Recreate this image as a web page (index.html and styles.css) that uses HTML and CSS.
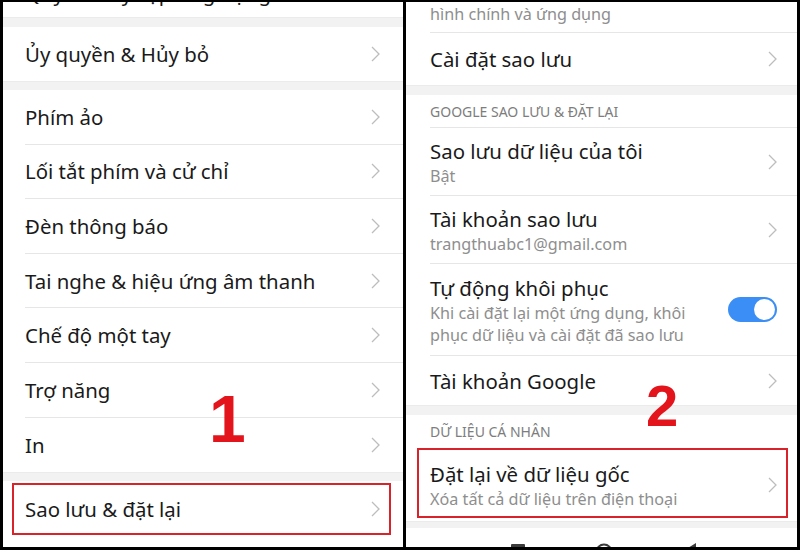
FILE: index.html
```html
<!DOCTYPE html>
<html lang="vi">
<head>
  <meta charset="UTF-8">
  <title>Sao lưu &amp; đặt lại</title>
  <link rel="stylesheet" href="styles.css">
</head>
<body>

<div class="screen">

  <!-- Màn hình 1: Cài đặt nâng cao -->
  <section class="panel panel-left">
    <div class="row row-cut last">
      <div class="row-body"><span class="title">Quyền truy cập ứng dụng</span></div>
    </div>
    <div class="band band-10"></div>

    <div class="row row-l last">
      <div class="row-body">
        <span class="title">Ủy quyền &amp; Hủy bỏ</span>
        <svg class="chev" viewBox="0 0 9 16"><polyline points="1,1 8,8 1,15"/></svg>
      </div>
    </div>
    <div class="band band-9"></div>

    <div class="row row-l">
      <div class="row-body">
        <span class="title">Phím ảo</span>
        <svg class="chev" viewBox="0 0 9 16"><polyline points="1,1 8,8 1,15"/></svg>
      </div>
    </div>
    <div class="row row-l">
      <div class="row-body">
        <span class="title">Lối tắt phím và cử chỉ</span>
        <svg class="chev" viewBox="0 0 9 16"><polyline points="1,1 8,8 1,15"/></svg>
      </div>
    </div>
    <div class="row row-l">
      <div class="row-body">
        <span class="title">Đèn thông báo</span>
        <svg class="chev" viewBox="0 0 9 16"><polyline points="1,1 8,8 1,15"/></svg>
      </div>
    </div>
    <div class="row row-l">
      <div class="row-body">
        <span class="title">Tai nghe &amp; hiệu ứng âm thanh</span>
        <svg class="chev" viewBox="0 0 9 16"><polyline points="1,1 8,8 1,15"/></svg>
      </div>
    </div>
    <div class="row row-l">
      <div class="row-body">
        <span class="title">Chế độ một tay</span>
        <svg class="chev" viewBox="0 0 9 16"><polyline points="1,1 8,8 1,15"/></svg>
      </div>
    </div>
    <div class="row row-l">
      <div class="row-body">
        <span class="title">Trợ năng</span>
        <svg class="chev" viewBox="0 0 9 16"><polyline points="1,1 8,8 1,15"/></svg>
      </div>
    </div>
    <div class="row row-l last">
      <div class="row-body">
        <span class="title">In</span>
        <svg class="chev" viewBox="0 0 9 16"><polyline points="1,1 8,8 1,15"/></svg>
      </div>
    </div>
    <div class="band band-9"></div>

    <div class="row row-backup last marked">
      <div class="row-body">
        <span class="title">Sao lưu &amp; đặt lại</span>
        <svg class="chev" viewBox="0 0 9 16"><polyline points="1,1 8,8 1,15"/></svg>
      </div>
    </div>

    <span class="num num-1">1</span>
  </section>

  <!-- Màn hình 2: Sao lưu & đặt lại -->
  <section class="panel panel-right">
    <div class="row row-cut-r">
      <div class="row-body">
        <div class="text">
          <span class="sub">Sao lưu danh bạ, tin nhắn, cài đặt và</span>
          <span class="sub">hình chính và ứng dụng</span>
        </div>
      </div>
    </div>
    <div class="row row-52 last">
      <div class="row-body">
        <span class="title">Cài đặt sao lưu</span>
        <svg class="chev" viewBox="0 0 9 16"><polyline points="1,1 8,8 1,15"/></svg>
      </div>
    </div>
    <div class="band band-10"></div>

    <div class="row row-head">
      <div class="row-body"><span class="head">Google sao lưu &amp; đặt lại</span></div>
    </div>
    <div class="row row-68">
      <div class="row-body">
        <div class="text">
          <span class="title">Sao lưu dữ liệu của tôi</span>
          <span class="sub">Bật</span>
        </div>
        <svg class="chev" viewBox="0 0 9 16"><polyline points="1,1 8,8 1,15"/></svg>
      </div>
    </div>
    <div class="row row-68">
      <div class="row-body">
        <div class="text">
          <span class="title">Tài khoản sao lưu</span>
          <span class="sub">trangthuabc1@gmail.com</span>
        </div>
        <svg class="chev" viewBox="0 0 9 16"><polyline points="1,1 8,8 1,15"/></svg>
      </div>
    </div>
    <div class="row row-92">
      <div class="row-body">
        <div class="text">
          <span class="title">Tự động khôi phục</span>
          <span class="sub">Khi cài đặt lại một ứng dụng, khôi</span>
          <span class="sub">phục dữ liệu và cài đặt đã sao lưu</span>
        </div>
        <span class="toggle on"></span>
      </div>
    </div>
    <div class="row row-49 last">
      <div class="row-body">
        <span class="title">Tài khoản Google</span>
        <svg class="chev" viewBox="0 0 9 16"><polyline points="1,1 8,8 1,15"/></svg>
      </div>
    </div>
    <div class="band band-10"></div>

    <div class="row row-head last">
      <div class="row-body"><span class="head">Dữ liệu cá nhân</span></div>
    </div>
    <div class="row row-reset last marked">
      <div class="row-body">
        <div class="text">
          <span class="title">Đặt lại về dữ liệu gốc</span>
          <span class="sub">Xóa tất cả dữ liệu trên điện thoại</span>
        </div>
        <svg class="chev" viewBox="0 0 9 16"><polyline points="1,1 8,8 1,15"/></svg>
      </div>
    </div>
    <div class="band band-7"></div>

    <nav class="navbar">
      <svg class="nav-icon" viewBox="0 0 18 18"><rect x="2" y="1" width="14" height="14" rx="1"/></svg>
      <svg class="nav-icon" viewBox="0 0 18 18"><circle cx="9" cy="9" r="7.5" class="ring"/></svg>
      <svg class="nav-icon" viewBox="0 0 18 18"><polygon points="15,0 2,8 15,16"/></svg>
    </nav>

    <span class="num num-2">2</span>
  </section>

</div>

</body>
</html>
```

FILE: styles.css
```css
html, body {
  margin: 0;
  padding: 0;
  background-color: #000;
}

body {
  width: 800px;
  height: 550px;
  overflow: hidden;
  font-family: "Noto Sans", Roboto, sans-serif;
}

.screen {
  display: flex;
  gap: 3px;
  padding: 2px 3px 3px;
  height: 550px;
  box-sizing: border-box;
}

.panel {
  background-color: #fff;
  overflow: hidden;
  position: relative;
  display: flex;
  flex-direction: column;
}

.panel-left {
  width: 400px;
}

.panel-right {
  flex: 1;
}

/* серые разделители групп */
.band {
  flex: none;
  background-color: #f2f2f2;
  border-top: 1px solid #ebebeb;
  box-sizing: border-box;
}

.band-10 { height: 10px; }
.band-9 { height: 9px; }
.band-7 { height: 7px; }

.row {
  flex: none;
  padding-left: 22px;
  position: relative;
}

.panel-right .row {
  padding-left: 24px;
}

.row-body {
  display: flex;
  align-items: center;
  justify-content: space-between;
  height: 100%;
  box-sizing: border-box;
  padding-right: 23px;
  border-bottom: 1px solid #e6e6e6;
}

.panel-right .row-body {
  padding-right: 20px;
}

.row.last .row-body {
  border-bottom: none;
}

.title {
  font-size: 20.4px;
  line-height: 28px;
  color: #1a1a1a;
}

.sub {
  font-size: 16.2px;
  line-height: 22px;
  color: #8e8e8e;
}

.head {
  font-size: 14px;
  color: #7d7d7d;
  text-transform: uppercase;
}

.text {
  display: flex;
  flex-direction: column;
}

.chev {
  width: 9px;
  height: 16px;
  flex: none;
  fill: none;
  stroke: #bdbdbd;
  stroke-width: 1.3;
}

/* высоты строк */
.row-cut { height: 42px; margin-top: -30px; }
.row-cut + .band { margin-top: 3px; }
.row-l { height: 54.6px; }
.row-l.last { height: 54px; }
.row-backup { height: 56px; }

.row-cut-r { height: 52px; margin-top: -21px; }
.row-cut-r .row-body {
  align-items: flex-end;
  padding-bottom: 7px;
}
.row-52 { height: 52px; }
.row-head { height: 33px; }
.row-68 { height: 68px; }
.row-92 { height: 92px; }
.row-49 { height: 49px; }
.row-reset { height: 73px; }

/* переключатель */
.toggle {
  flex: none;
  width: 49px;
  height: 25px;
  border-radius: 13px;
  background-color: #3a8ef5;
  position: relative;
}

.toggle::after {
  content: "";
  position: absolute;
  top: 2px;
  right: 2px;
  width: 21px;
  height: 21px;
  border-radius: 50%;
  background-color: #fff;
}

/* красная рамка-выделение */
.marked::after {
  content: "";
  position: absolute;
  border: 2px solid #d8232a;
}

.row-backup.marked::after {
  left: 9px;
  right: 12px;
  top: 2px;
  bottom: 2px;
}

.row-reset.marked::after {
  left: 11px;
  right: 9px;
  top: 0;
  bottom: 3px;
}

.num {
  position: absolute;
  font-family: "Liberation Sans", Arial, sans-serif;
  font-weight: bold;
  line-height: 1;
  color: #e3141b;
}

.num-1 {
  font-size: 66px;
  left: 206px;
  top: 384px;
}

.num-2 {
  font-size: 58px;
  left: 240px;
  top: 375px;
}

.navbar {
  flex: 1;
  display: flex;
  justify-content: center;
  gap: 68px;
  padding: 15px 0 0 5px;
}

.nav-icon {
  width: 18px;
  height: 18px;
  flex: none;
  fill: #3a3a3a;
}

.nav-icon .ring {
  fill: none;
  stroke: #3a3a3a;
  stroke-width: 2;
}
```
